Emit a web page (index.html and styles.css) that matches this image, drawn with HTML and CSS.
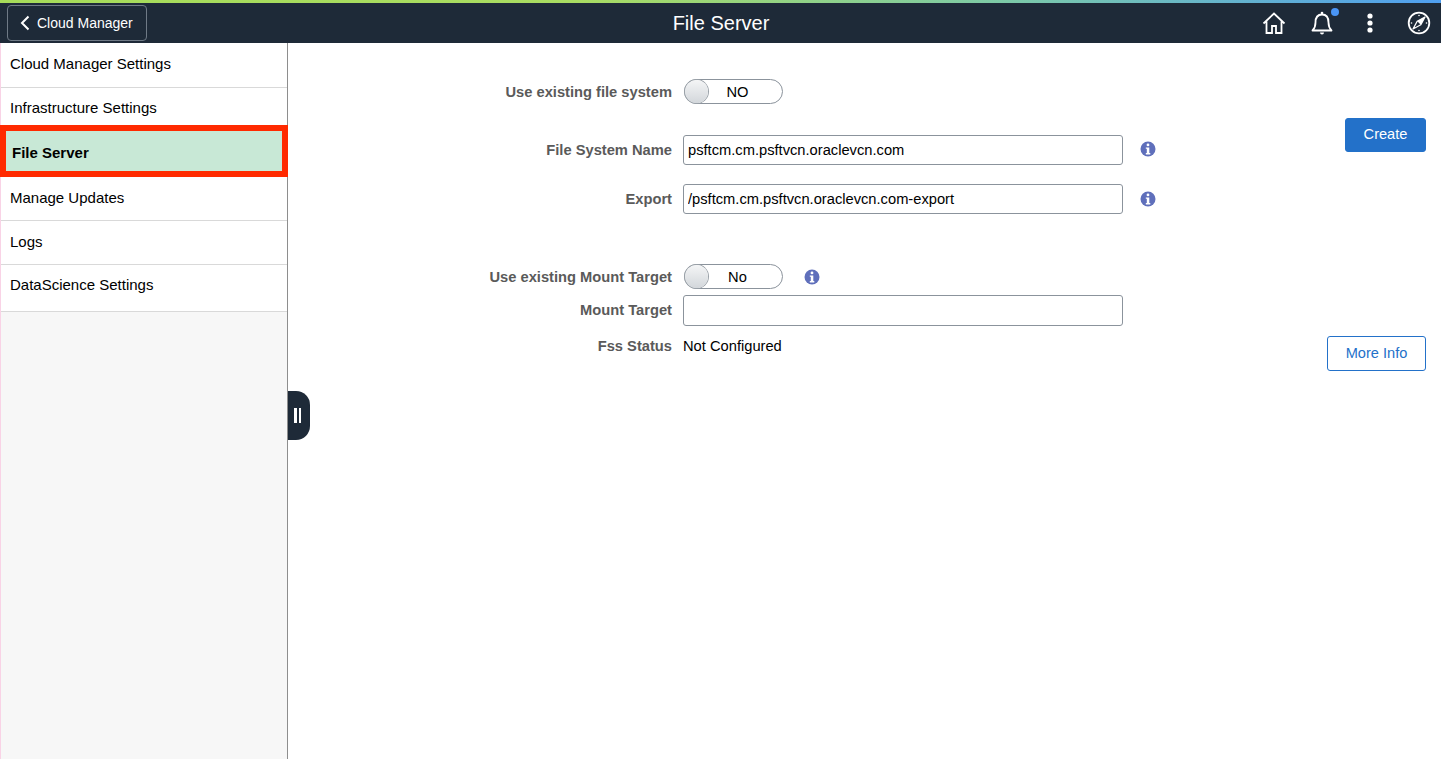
FILE: index.html
```html
<!DOCTYPE html>
<html>

<head>
    <title>File Server</title>

    <link rel="stylesheet" href="styles.css">
</head>

<body>
    <div class="accent-bar"></div>
    <header class="top-bar">
        <button class="back-btn">
            <svg width="10" height="16" viewBox="0 0 10 16"><path d="M8.5 1.5 2 8l6.500 6.500" fill="none" stroke="#fff" stroke-width="2"/></svg>
            <span>Cloud Manager</span>
        </button>
        <div class="page-title">File Server</div>
        <div class="top-icons">
            <svg class="top-icon" width="24" height="24" viewBox="0 0 24 24">
                <path d="M1.500 12.500 12 2.500l10.500 10M4.500 10.500V22h5.500v-7h4v7h5.500V10.500" fill="none" stroke="#fff" stroke-width="1.800"/>
            </svg>
            <span class="bell-wrap">
                <svg class="top-icon" width="24" height="24" viewBox="0 0 24 24">
                    <path d="M2.500 19.500c2-2 3-3.500 3-8C5.500 6.500 8 3.500 12 3.500s6.500 3 6.500 8c0 4.500 1 6 3 8z" fill="none" stroke="#fff" stroke-width="1.800" stroke-linejoin="round"/>
                    <circle cx="12" cy="2" r="1.300" fill="#fff"/>
                    <path d="M10 21.500a2 2 0 0 0 4 0z" fill="#fff"/>
                </svg>
                <span class="bell-dot"></span>
            </span>
            <svg class="top-icon" width="24" height="24" viewBox="0 0 24 24">
                <circle cx="12" cy="5" r="2.600" fill="#fff"/>
                <circle cx="12" cy="12" r="2.600" fill="#fff"/>
                <circle cx="12" cy="19" r="2.600" fill="#fff"/>
            </svg>
            <svg class="top-icon compass" width="24" height="24" viewBox="0 0 24 24">
                <circle cx="12" cy="12" r="10.300" fill="none" stroke="#fff" stroke-width="1.800"/>
                <path d="M18 6 13.800 13.800 6 18l4.200-7.800z" fill="none" stroke="#fff" stroke-width="1.300" stroke-linejoin="round"/>
                <path d="M18 6 13.800 13.800 10.200 10.200z" fill="#fff"/>
                <circle cx="12" cy="4.500" r=".8" fill="#fff"/>
                <circle cx="19.500" cy="12" r=".8" fill="#fff"/>
                <circle cx="12" cy="19.500" r=".8" fill="#fff"/>
                <circle cx="4.500" cy="12" r=".8" fill="#fff"/>
            </svg>
        </div>
    </header>

    <div class="page">
        <nav class="side-nav">
            <ul class="nav-list">
                <li class="nav-item nav-first">Cloud Manager Settings</li>
                <li class="nav-item nav-second">Infrastructure Settings</li>
                <li class="nav-item nav-active">File Server</li>
                <li class="nav-item nav-updates">Manage Updates</li>
                <li class="nav-item nav-logs">Logs</li>
                <li class="nav-item nav-last">DataScience Settings</li>
            </ul>
        </nav>
        <div class="collapse-tab"><span></span><span></span></div>

        <main class="content">
            <div class="form">
                <div class="row row-fs-toggle">
                    <label class="field-label">Use existing file system</label>
                    <div class="toggle"><span class="knob"></span><span class="toggle-text">NO</span></div>
                </div>
                <div class="row row-name">
                    <label class="field-label">File System Name</label>
                    <input class="text-field" type="text" value="psftcm.cm.psftvcn.oraclevcn.com">
                    <svg class="info wide" width="16" height="16" viewBox="0 0 16 16"><use href="#info-icon"/></svg>
                </div>
                <div class="row row-export">
                    <label class="field-label">Export</label>
                    <input class="text-field" type="text" value="/psftcm.cm.psftvcn.oraclevcn.com-export">
                    <svg class="info wide" width="16" height="16" viewBox="0 0 16 16"><use href="#info-icon"/></svg>
                </div>
                <div class="row row-mt-toggle">
                    <label class="field-label">Use existing Mount Target</label>
                    <div class="toggle"><span class="knob"></span><span class="toggle-text">No</span></div>
                    <svg class="info" width="16" height="16" viewBox="0 0 16 16"><use href="#info-icon"/></svg>
                </div>
                <div class="row row-target">
                    <label class="field-label">Mount Target</label>
                    <input class="text-field" type="text">
                </div>
                <div class="row row-status">
                    <label class="field-label">Fss Status</label>
                    <span class="field-value">Not Configured</span>
                </div>
            </div>
            <div class="actions">
                <button class="btn btn-primary">Create</button>
                <button class="btn btn-outline">More Info</button>
            </div>
        </main>
    </div>

    <svg width="0" height="0" class="svg-defs">
        <symbol id="info-icon" viewBox="0 0 16 16">
            <circle cx="8" cy="8" r="7.500" fill="#5f6fbb"/>
            <circle cx="8" cy="3.900" r="1.400" fill="#fff"/>
            <path d="M5.800 6.400h3.500v5.600h1v1.400H5.800V12h1V7.800h-1z" fill="#fff"/>
        </symbol>
    </svg>
</body>

</html>
```

FILE: styles.css
```css
* {
    box-sizing: border-box;
}

html,
body {
    height: 100%;
}

body {
    margin: 0;
    display: flex;
    flex-direction: column;
    height: 759px;
    overflow: hidden;
    font-family: 'Liberation Sans', Arial, sans-serif;
    font-size: 14.7px;
    color: #000;
    background-color: #fff;
}

.svg-defs {
    display: none;
}

.accent-bar {
    height: 3px;
    flex: none;
    background: linear-gradient(90deg, #a6dc5a 0%, #a9dc62 40%, #7cc9a8 70%, #4f9ff0 100%);
}

.top-bar {
    height: 40px;
    flex: none;
    display: flex;
    align-items: center;
    justify-content: space-between;
    position: relative;
    padding: 0 10px 0 7px;
    background-color: #1e2a38;
    color: #fff;
}

.back-btn {
    display: flex;
    align-items: center;
    gap: 7px;
    width: 140px;
    height: 36px;
    padding: 0 0 0 12px;
    background: none;
    border: 1px solid #6f7a86;
    border-radius: 4px;
    color: #fff;
    font-family: inherit;
    font-size: 14px;
    margin-top: -1px;
}

.page-title {
    position: absolute;
    left: 0;
    right: 0;
    padding-left: 1px;
    text-align: center;
    font-size: 20px;
    pointer-events: none;
}

.top-icons {
    display: flex;
    align-items: center;
    gap: 24px;
}

.top-icon {
    display: block;
}

.compass {
    margin-left: 1px;
}

.bell-wrap {
    position: relative;
    display: block;
}

.bell-dot {
    position: absolute;
    top: -3px;
    right: -5px;
    width: 8px;
    height: 8px;
    border-radius: 50%;
    background-color: #4a95f5;
}

.page {
    flex: 1;
    display: flex;
    position: relative;
    min-height: 0;
}

.side-nav {
    width: 288px;
    flex: none;
    background-color: #f7f7f7;
    border-left: 1px solid #f9d3e6;
    border-right: 1px solid #8e8e8e;
}

.nav-list {
    list-style: none;
    margin: 0;
    padding: 0;
}

.nav-item {
    display: flex;
    align-items: center;
    padding-left: 9px;
    font-size: 15px;
    background-color: #fff;
    border-bottom: 1px solid #d9d9d9;
}

.nav-first {
    height: 45px;
    padding-bottom: 4px;
}

.nav-second {
    height: 37px;
    padding-top: 2px;
    border-bottom: none;
}

.nav-active {
    height: 52px;
    margin: 0 -1px;
    padding-left: 6px;
    padding-top: 3px;
    background-color: #c8e8d6;
    border: 6px solid #ff2a00;
    font-weight: bold;
}

.nav-updates {
    height: 44px;
    padding-bottom: 3px;
}

.nav-logs {
    height: 44px;
    padding-bottom: 2px;
}

.nav-last {
    height: 47px;
    padding-bottom: 8px;
}

.collapse-tab {
    position: absolute;
    left: 288px;
    top: 348px;
    width: 22px;
    height: 49px;
    display: flex;
    justify-content: center;
    align-items: center;
    gap: 2px;
    padding-right: 3px;
    background-color: #1e2a38;
    border-radius: 0 14px 14px 0;
}

.collapse-tab span {
    width: 2.500px;
    height: 15px;
    background-color: #fff;
}

.content {
    flex: 1;
    display: flex;
    justify-content: space-between;
    padding-right: 15px;
}

.form {
    padding-top: 36px;
}

.row {
    display: flex;
    align-items: center;
}

.row-name {
    margin-top: 31px;
}

.row-export {
    margin-top: 19px;
}

.row-mt-toggle {
    margin-top: 50px;
}

.row-target {
    margin-top: 6px;
}

.row-status {
    margin-top: 12px;
}

.field-label {
    width: 384px;
    margin-right: 11px;
    text-align: right;
    font-weight: bold;
    color: #5a5a5a;
}

.row-target .field-label {
    padding-bottom: 2px;
}

.toggle {
    position: relative;
    width: 99px;
    height: 25px;
    margin-left: 1px;
    display: flex;
    align-items: center;
    justify-content: center;
    border: 1px solid #8b939c;
    border-radius: 13px;
    background-color: #fff;
    padding-left: 8px;
}

.knob {
    position: absolute;
    left: 0;
    top: 0;
    width: 23px;
    height: 23px;
    border-radius: 50%;
    background: linear-gradient(180deg, #f4f5f6, #d3d7db);
    box-shadow: 0 0 0 1px #9aa1a8;
}

.text-field {
    width: 440px;
    height: 30px;
    padding: 0 4px;
    border: 1px solid #8b939c;
    border-radius: 3px;
    font-family: inherit;
    font-size: 14.7px;
    color: #000;
}

.row-target .text-field {
    height: 31px;
}

.info {
    display: block;
    margin-left: 17px;
}

.row-name .info {
    margin-top: -2px;
}

.row-mt-toggle .info {
    margin-left: 21px;
}

.actions {
    display: flex;
    flex-direction: column;
    align-items: flex-end;
    padding-top: 75px;
}

.btn {
    font-family: inherit;
    font-size: 14.6px;
    border-radius: 3px;
}

.btn-primary {
    width: 81px;
    height: 34px;
    padding: 0 0 3px;
    background-color: #2371c9;
    border: 1px solid #2371c9;
    color: #fff;
}

.btn-outline {
    width: 99px;
    height: 35px;
    margin-top: 184px;
    padding: 0 0 2px;
    background-color: #fff;
    border: 1px solid #2371c9;
    color: #2371c9;
}
```
